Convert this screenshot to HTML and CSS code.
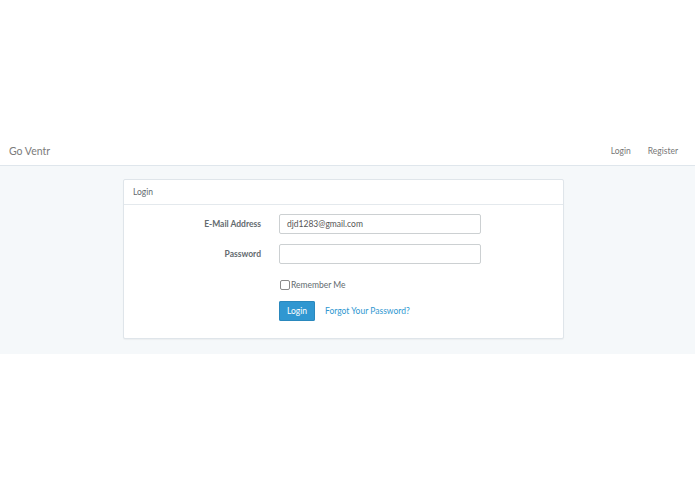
FILE: index.html
```html
<!DOCTYPE html>
<html>
<head>
<meta charset="utf-8">
<link rel="stylesheet" href="styles.css">
</head>
<body>
<div class="top-space"></div>
<nav class="navbar">
  <a class="brand">Go Ventr</a>
  <div class="nav-links">
    <a class="nav-link">Login</a>
    <a class="nav-link">Register</a>
  </div>
</nav>
<main class="app">
  <section class="panel">
    <div class="panel-heading">Login</div>
    <form class="panel-body">
      <label class="label">E-Mail Address</label>
      <div class="input">djd1283@gmail.com</div>
      <label class="label">Password</label>
      <div class="input"></div>
      <div></div>
      <div class="remember"><span class="checkbox"></span><span>Remember Me</span></div>
      <div></div>
      <div class="actions"><span class="btn">Login</span><a class="link">Forgot Your Password?</a></div>
    </form>
  </section>
</main>
</body>
</html>
```
FILE: styles.css
```css
html, body {
  margin: 0;
  padding: 0;
  background: #fff;
  font-family: Lato, "Open Sans", sans-serif;
  color: #636b6f;
  font-size: 8.5px;
}
.top-space {
  height: 136px;
}
.navbar {
  height: 29px;
  border-bottom: 1px solid #dfe6ec;
  background: #fff;
  display: flex;
  align-items: center;
  justify-content: space-between;
  padding: 0 17px 0 9px;
}
.brand {
  font-size: 10.5px;
  color: #7b7b7b;
}
.nav-links {
  display: flex;
  gap: 17px;
  margin-right: 0;
}
.nav-link {
  font-size: 8.5px;
  color: #777;
}
.nav-link:first-child {
  margin-left: -2px;
}
.app {
  background: #f5f8fa;
  padding: 13px 0 15px 123px;
}
.panel {
  width: 439px;
  background: #fff;
  border: 1px solid #dfe5ea;
  border-radius: 2px;
  box-shadow: 0 1px 1px rgba(0,0,0,0.04);
}
.panel-heading {
  height: 24px;
  line-height: 24px;
  padding-left: 9px;
  border-bottom: 1px solid #e4e9ed;
  color: #636b6f;
}
.panel-body {
  display: grid;
  grid-template-columns: 137px 202px;
  column-gap: 18px;
  row-gap: 10px;
  padding: 9px 0 17px 0;
}
.label {
  font-weight: 700;
  text-align: right;
  line-height: 20px;
  color: #636b6f;
}
.input {
  height: 18px;
  line-height: 18px;
  border: 1px solid #ccd0d2;
  border-radius: 2px;
  padding-left: 7px;
  color: #555;
  background: #fff;
}
.remember {
  display: flex;
  align-items: center;
  gap: 1px;
  height: 20px;
  margin-top: 1px;
}
.checkbox {
  width: 8px;
  height: 8px;
  border: 1px solid #8a8a8a;
  border-radius: 2px;
  margin-left: 1px;
  background: #fff;
}
.actions {
  display: flex;
  align-items: center;
  gap: 10px;
  margin-top: -4px;
}
.btn {
  width: 36px;
  height: 20px;
  line-height: 20px;
  text-align: center;
  background: #3097d1;
  color: #fff;
  border-radius: 2px;
  box-shadow: inset 0 0 0 1px #2a88bd;
}
.link {
  color: #3097d1;
}
```
